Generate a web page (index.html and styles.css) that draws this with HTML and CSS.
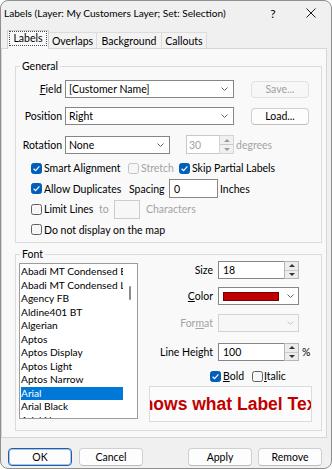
FILE: index.html
```html
<!DOCTYPE html>
<html lang="en">
<head>
<meta charset="utf-8">
<title>Labels</title>
<link rel="stylesheet" href="styles.css">
</head>
<body>
<div class="window">
  <div class="titlebar">
    <span class="title">Labels (Layer: My Customers Layer; Set: Selection)</span>
    <span class="tb-help">?</span>
    <span class="tb-close"><svg width="10" height="10" viewBox="0 0 10 10"><path d="M0.5 0.5L9.5 9.5M9.5 0.5L0.5 9.5" stroke="#1c1c1c" stroke-width="1" fill="none"/></svg></span>
  </div>

  <div class="tabs">
    <div class="tab tab-active"><span class="focus">Labels</span></div>
    <div class="tab tab-overlaps">Overlaps</div>
    <div class="tab tab-background">Background</div>
    <div class="tab tab-callouts">Callouts</div>
  </div>

  <div class="page">
    <fieldset class="group group-general">
      <legend>General</legend>

      <div class="row row-field">
        <span class="lbl"><u>F</u>ield</span>
        <div class="combo combo-wide"><span class="val">[Customer Name]</span><svg class="chev" width="7" height="4" viewBox="0 0 7 4"><path d="M0.5 0.5L3.5 3.5L6.5 0.5" stroke="#616161" fill="none"/></svg></div>
        <button class="btn side-btn disabled" type="button">Save...</button>
      </div>

      <div class="row row-position">
        <span class="lbl">Position</span>
        <div class="combo combo-wide"><span class="val">Right</span><svg class="chev" width="7" height="4" viewBox="0 0 7 4"><path d="M0.5 0.5L3.5 3.5L6.5 0.5" stroke="#616161" fill="none"/></svg></div>
        <button class="btn side-btn" type="button">Load...</button>
      </div>

      <div class="row row-rotation">
        <span class="lbl">Rotation</span>
        <div class="combo combo-rot"><span class="val">None</span><svg class="chev" width="7" height="4" viewBox="0 0 7 4"><path d="M0.5 0.5L3.5 3.5L6.5 0.5" stroke="#616161" fill="none"/></svg></div>
        <div class="spin spin-rot disabled">
          <span class="spin-val">30</span>
          <span class="spin-btns"><span class="sb sb-up"></span><span class="sb sb-down"></span></span>
        </div>
        <span class="after-rot dim">degrees</span>
      </div>

      <div class="crow">
        <span class="chk on"><svg width="9" height="9" viewBox="0 0 9 9"><path d="M1.6 4.7L3.6 6.6L7.4 2.4" stroke="#fff" stroke-width="1.2" fill="none"/></svg></span>
        <span class="ct ct-smart">Smart Alignment</span>
        <span class="chk off-dim"></span>
        <span class="ct ct-stretch dim">Stretch</span>
        <span class="chk on"><svg width="9" height="9" viewBox="0 0 9 9"><path d="M1.6 4.7L3.6 6.6L7.4 2.4" stroke="#fff" stroke-width="1.2" fill="none"/></svg></span>
        <span class="ct">Skip Partial Labels</span>
      </div>

      <div class="crow">
        <span class="chk on"><svg width="9" height="9" viewBox="0 0 9 9"><path d="M1.6 4.7L3.6 6.6L7.4 2.4" stroke="#fff" stroke-width="1.2" fill="none"/></svg></span>
        <span class="ct ct-allow">Allow Duplicates</span>
        <span class="ct ct-spacing">Spacing</span>
        <div class="edit edit-spacing">0</div>
        <span class="ct ct-inches">Inches</span>
      </div>

      <div class="crow">
        <span class="chk"></span>
        <span class="ct ct-limit">Limit Lines</span>
        <span class="ct ct-to dim">to</span>
        <div class="edit edit-chars disabled"></div>
        <span class="ct ct-chars dim">Characters</span>
      </div>

      <div class="crow">
        <span class="chk"></span>
        <span class="ct">Do not display on the map</span>
      </div>
    </fieldset>

    <fieldset class="group group-font">
      <legend>Font</legend>
      <div class="font-body">
        <div class="listbox">
          <div class="items">
            <div class="item">Abadi MT Condensed Extra Bold</div>
            <div class="item">Abadi MT Condensed Light</div>
            <div class="item">Agency FB</div>
            <div class="item">Aldine401 BT</div>
            <div class="item">Algerian</div>
            <div class="item">Aptos</div>
            <div class="item">Aptos Display</div>
            <div class="item">Aptos Light</div>
            <div class="item">Aptos Narrow</div>
            <div class="item sel">Arial</div>
            <div class="item">Arial Black</div>
            <div class="item">Arial Narrow</div>
          </div>
          <div class="vscroll"><span class="thumb"></span></div>
        </div>

        <div class="font-right">
          <div class="frow frow-size">
            <span class="flbl">Size</span>
            <div class="spin spin-font">
              <span class="spin-val">18</span>
              <span class="spin-btns"><span class="sb sb-up"></span><span class="sb sb-down"></span></span>
            </div>
          </div>
          <div class="frow frow-color">
            <span class="flbl"><u>C</u>olor</span>
            <div class="combo combo-font"><span class="swatch"></span><svg class="chev" width="7" height="4" viewBox="0 0 7 4"><path d="M0.5 0.5L3.5 3.5L6.5 0.5" stroke="#616161" fill="none"/></svg></div>
          </div>
          <div class="frow frow-format">
            <span class="flbl dim">For<u>m</u>at</span>
            <div class="combo combo-font disabled"><span class="val"></span><svg class="chev" width="7" height="4" viewBox="0 0 7 4"><path d="M0.5 0.5L3.5 3.5L6.5 0.5" stroke="#c4c4c4" fill="none"/></svg></div>
          </div>
          <div class="frow frow-lh">
            <span class="flbl">Line Height</span>
            <div class="spin spin-font">
              <span class="spin-val">100</span>
              <span class="spin-btns"><span class="sb sb-up"></span><span class="sb sb-down"></span></span>
            </div>
            <span class="pct">%</span>
          </div>
          <div class="brow">
            <span class="chk on"><svg width="9" height="9" viewBox="0 0 9 9"><path d="M1.6 4.7L3.6 6.6L7.4 2.4" stroke="#fff" stroke-width="1.2" fill="none"/></svg></span>
            <span class="ct ct-bold"><u>B</u>old</span>
            <span class="chk chk-italic"></span>
            <span class="ct"><u>I</u>talic</span>
          </div>
          <div class="preview"><span class="preview-text">Shows what Label Text looks like</span></div>
        </div>
      </div>
    </fieldset>
  </div>

  <div class="buttons">
    <button class="btn dbtn default" type="button">OK</button>
    <button class="btn dbtn" type="button">Cancel</button>
    <span class="spacer"></span>
    <button class="btn dbtn" type="button">Apply</button>
    <button class="btn dbtn" type="button">Remove</button>
  </div>
</div>
</body>
</html>
```

FILE: styles.css
```css
* { box-sizing: border-box; }
html, body { margin: 0; padding: 0; }
body {
  font-family: Lato, "Noto Sans", sans-serif;
  font-size: 10.5px;
  color: #000;
  background: #ffffff;
}
u { text-decoration-thickness: 1px; text-underline-offset: 1px; }
.dim { color: #a3a3a3; }

.window {
  width: 332px;
  height: 469px;
  border: 1px solid #8f8f8f;
  border-radius: 8px;
  background: #f0f0f0;
  overflow: hidden;
  display: flex;
  flex-direction: column;
}

/* title bar */
.titlebar {
  height: 28px;
  flex: none;
  display: flex;
  align-items: center;
  padding: 0 0 4px 3px;
}
.title { flex: 1; white-space: nowrap; font-size: 10.1px; }
.tb-help { width: 20px; text-align: center; margin-right: 18px; font-size: 12px; }
.tb-close { width: 20px; display: flex; justify-content: center; margin-right: 10px; }

/* tabs */
.tabs {
  height: 19px;
  flex: none;
  display: flex;
  align-items: flex-end;
  padding-left: 6px;
}
.tab {
  height: 16px;
  border-top: 1px solid #dcdcdc;
  border-right: 1px solid #dcdcdc;
  background: #f3f3f3;
  display: flex;
  align-items: center;
  justify-content: center;
  line-height: 12px;
}
.tab-active {
  height: 19px;
  width: 42px;
  margin-bottom: -1px;
  border: 1px solid #cfcfcf;
  border-bottom: none;
  background: #f9f9f9;
  position: relative;
  z-index: 1;
  align-items: flex-start;
}
.focus {
  display: block;
  width: 38px;
  height: 15px;
  border: 1px dotted #4a4a4a;
  text-align: center;
  line-height: 13px;
}
.tab-overlaps { width: 48px; }
.tab-background { width: 65px; }
.tab-callouts { width: 45px; }

/* page */
.page {
  height: 390px;
  flex: none;
  margin-right: 4px;
  border: 1px solid #d6d6d6;
  background: #f9f9f9;
  padding: 0 4px 0 13px;
  display: flex;
  flex-direction: column;
}

.group {
  margin: 0;
  padding: 0;
  border: 1px solid #dcdcdc;
  min-width: 0;
}
.group legend {
  margin-left: 4px;
  padding: 0 2px;
  line-height: 12px;
}
.group-general { margin-top: 11px; padding-bottom: 2px; }
.group-font { margin-top: 5px; padding-bottom: 8px; }

/* general rows */
.row { display: flex; align-items: center; }
.row-field { height: 18px; margin-top: 8px; }
.row-position { height: 18px; margin-top: 9px; }
.row-rotation { height: 19px; margin-top: 10px; margin-bottom: 4px; }
.lbl { width: 46px; text-align: right; margin-right: 3px; white-space: nowrap; }

.combo {
  height: 18px;
  border: 1px solid #868686;
  background: #fff;
  display: flex;
  align-items: center;
  padding: 0 5px 0 3px;
  white-space: nowrap;
}
.combo .val { flex: 1; }
.combo-wide { width: 169px; }
.combo-rot { width: 105px; }
.combo.disabled { border-color: #d3d3d3; background: #f7f7f7; }

.btn {
  font: inherit;
  color: #000;
  margin: 0;
  padding: 0;
  background: #fdfdfd;
  border: 1px solid #d0d0d0;
  border-bottom-color: #bdbdbd;
  border-radius: 4px;
  line-height: 14px;
  text-align: center;
}
.btn.disabled { color: #a0a0a0; background: #f7f7f7; border-color: #e1e1e1; }
.side-btn { width: 58px; height: 17px; margin-left: 17px; }

.spin { display: flex; height: 19px; }
.spin-val {
  flex: 1;
  border: 1px solid #868686;
  background: #fff;
  padding-left: 4px;
  display: flex;
  align-items: center;
}
.spin-btns {
  width: 15px;
  border: 1px solid #b5b5b5;
  margin-left: -1px;
  background: #ececec;
  display: flex;
  flex-direction: column;
}
.sb { flex: 1; display: flex; align-items: center; justify-content: center; }
.sb-up { border-bottom: 1px solid #c9c9c9; }
.sb-up::before {
  content: "";
  border-left: 3px solid transparent;
  border-right: 3px solid transparent;
  border-bottom: 3px solid #333;
}
.sb-down::before {
  content: "";
  border-left: 3px solid transparent;
  border-right: 3px solid transparent;
  border-top: 3px solid #333;
}
.spin-rot { width: 48px; margin-left: 16px; }
.spin-rot .spin-val { padding-left: 2px; color: #a3a3a3; border-color: #c8c8c8; }
.spin-rot .spin-btns { border-color: #d4d4d4; background: #f0f0f0; }
.spin-rot .sb-up::before { border-bottom-color: #9a9a9a; }
.spin-rot .sb-down::before { border-top-color: #9a9a9a; }
.after-rot { margin-left: 2px; }

/* check rows */
.crow {
  height: 20.5px;
  display: flex;
  align-items: center;
  padding-left: 15px;
  white-space: nowrap;
}
.chk {
  width: 11px;
  height: 11px;
  flex: none;
  border: 1px solid #5f5f5f;
  border-radius: 2.5px;
  background: #f6f6f6;
  margin-right: 2px;
  display: flex;
  align-items: center;
  justify-content: center;
}
.chk.on { background: #005fb8; border-color: #005fb8; }
.chk.off-dim { border-color: #c3c3c3; }
.ct-smart { width: 84px; }
.ct-stretch { width: 38px; }
.ct-allow { width: 85px; }
.ct-spacing { width: 40px; }
.ct-inches { margin-left: 2px; }
.ct-limit { width: 55px; }
.ct-to { width: 15px; }
.ct-chars { margin-left: 6px; }

.edit {
  height: 19px;
  border: 1px solid #868686;
  background: #fff;
  padding-left: 4px;
  display: flex;
  align-items: center;
}
.edit-spacing { width: 49px; }
.edit-chars { width: 26px; }
.edit.disabled { border-color: #cdcdcd; background: #f7f7f7; }

/* font group */
.font-body { display: flex; align-items: flex-start; }
.listbox {
  width: 119px;
  height: 156px;
  margin: 3px 0 0 3px;
  border: 1px solid #9c9c9c;
  background: #fff;
  padding-top: 1px;
  display: flex;
  overflow: hidden;
}
.items { width: 102px; margin-left: 1px; flex: none; }
.item {
  height: 13.5px;
  line-height: 13.5px;
  font-size: 10.2px;
  white-space: nowrap;
  overflow: hidden;
}
.item.sel { background: #0078d7; color: #fff; }
.vscroll { flex: 1; padding: 21px 0 0 6px; }
.thumb { display: block; width: 2px; height: 14px; background: #8a8a8a; border-radius: 1px; }

.font-right { flex: 1; display: flex; flex-direction: column; padding-top: 1px; }
.frow { display: flex; align-items: center; height: 18px; }
.frow-color { margin-top: 8px; }
.frow-format { margin-top: 9px; }
.frow-lh { margin-top: 11px; }
.flbl { width: 75px; text-align: right; margin-right: 5px; white-space: nowrap; }
.spin-font { width: 81px; height: 18px; }
.combo-font { width: 81px; padding: 0 4px 0 4px; }
.swatch {
  flex: 1;
  height: 9px;
  margin-right: 8px;
  background: #c00000;
  border: 1px solid #7a0000;
}
.pct { margin-left: 3px; }

.brow {
  height: 12px;
  margin-top: 9px;
  padding-left: 72px;
  display: flex;
  align-items: center;
}
.ct-bold { width: 29px; }
.chk-italic { margin-right: 1px; }

.preview {
  width: 163px;
  height: 36px;
  margin: 4px 0 0 11px;
  border: 1px solid #dcdcdc;
  background: #fcfcfc;
  overflow: hidden;
  white-space: nowrap;
}
.preview-text {
  display: block;
  margin-left: -19px;
  font-family: "Liberation Sans", Arial, sans-serif;
  font-weight: 700;
  font-size: 17.5px;
  line-height: 34px;
  color: #c00000;
}

/* bottom buttons */
.buttons {
  flex: none;
  height: 18px;
  margin-top: 10px;
  padding: 0 9px 0 7px;
  display: flex;
}
.dbtn { width: 64px; height: 18px; }
.dbtn + .dbtn { margin-left: 7px; }
.spacer { flex: 1; }
.spacer + .dbtn { margin-left: 0; }
.dbtn.default { border: 1px solid #1f5fa6; box-shadow: inset 0 0 0 1px rgba(0, 95, 184, 0.35); }
.buttons .dbtn:last-child { margin-left: 6px; }
```
